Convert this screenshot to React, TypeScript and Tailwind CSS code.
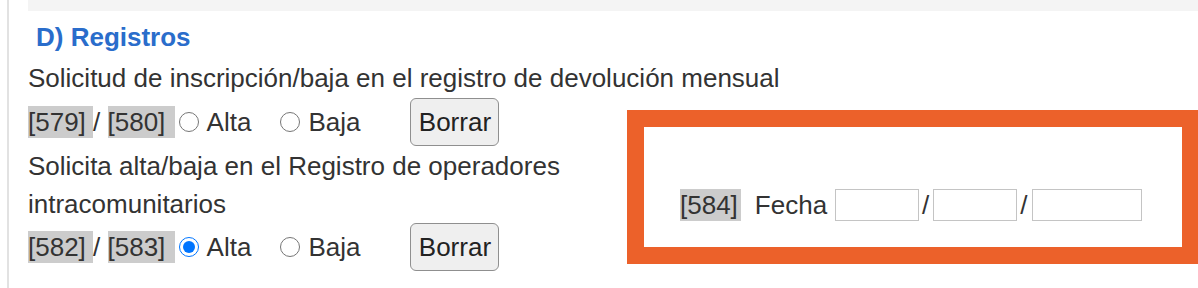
import React from 'react';

const Code: React.FC<{ children: React.ReactNode; className?: string }> = ({ children, className }) => (
  <span className={`bg-[#cccccc] whitespace-pre leading-[32px] ${className ?? ''}`}>{children}</span>
);

const Radio: React.FC<{ label: string; name: string; checked?: boolean; className?: string }> = ({ label, name, checked, className }) => (
  <label className={`flex items-center ${className ?? ''}`}>
    <input type="radio" name={name} defaultChecked={checked} className="w-[20px] h-[20px] m-0 mr-[8px] accent-[#0075ff]" />
    <span>{label}</span>
  </label>
);

const BorrarButton: React.FC = () => (
  <button className="h-[48px] w-[89px] rounded-[6px] border-[1.5px] border-[#8f8f8f] bg-[#efefef] text-[#222]">
    Borrar
  </button>
);

export default function App() {
  return (
    <div className="w-[1198px] h-[288px] overflow-hidden bg-white pl-[7px] font-['Liberation_Sans',Arial,sans-serif] text-[26px] text-[#333]">
      <div className="h-full border-l-2 border-[#e2e2e2] pl-[19px]">
        <div className="h-[11px] bg-[#f4f4f4]" />
        <div className="flex">
          <div className="w-[599px] shrink-0">
            <h2 className="mt-[7px] pl-[8px] leading-[38px] font-bold text-[#2a6dcb]">D) Registros</h2>
            <p className="mt-[3px] leading-[38px] whitespace-nowrap">
              Solicitud de inscripción/baja en el registro de devolución mensual
            </p>
            <div className="flex items-center h-[50px]">
              <Code>[579] </Code>
              <span className="whitespace-pre">/ </span>
              <Code className="pr-[2px]">[580] </Code>
              <Radio name="r1" label="Alta" className="ml-[4px]" />
              <Radio name="r1" label="Baja" className="ml-[29px]" />
              <div className="ml-[50px]">
                <BorrarButton />
              </div>
            </div>
            <p className="leading-[38px] w-[580px]">
              Solicita alta/baja en el Registro de operadores intracomunitarios
            </p>
            <div className="flex items-center h-[48px]">
              <Code>[582] </Code>
              <span className="whitespace-pre">/ </span>
              <Code className="pr-[2px]">[583] </Code>
              <Radio name="r2" label="Alta" checked className="ml-[4px]" />
              <Radio name="r2" label="Baja" className="ml-[29px]" />
              <div className="ml-[50px]">
                <BorrarButton />
              </div>
            </div>
          </div>
          <div className="mt-[99px] w-[572px] h-[154px] shrink-0 border-[17px] border-[#ec612a] pl-[36px] pt-[62px]">
            <div className="flex items-center h-[32px]">
              <Code className="pr-[3px]">[584]</Code>
              <span className="ml-[14px] mr-[8px]">Fecha</span>
              <input className="w-[84px] h-[32px] border-[1.5px] border-[#c4c4c4] bg-white" />
              <span className="ml-[3px] mr-[4px]">/</span>
              <input className="w-[84px] h-[32px] border-[1.5px] border-[#c4c4c4] bg-white" />
              <span className="ml-[3px] mr-[4px]">/</span>
              <input className="w-[110px] h-[32px] border-[1.5px] border-[#c4c4c4] bg-white" />
            </div>
          </div>
        </div>
      </div>
    </div>
  );
}
